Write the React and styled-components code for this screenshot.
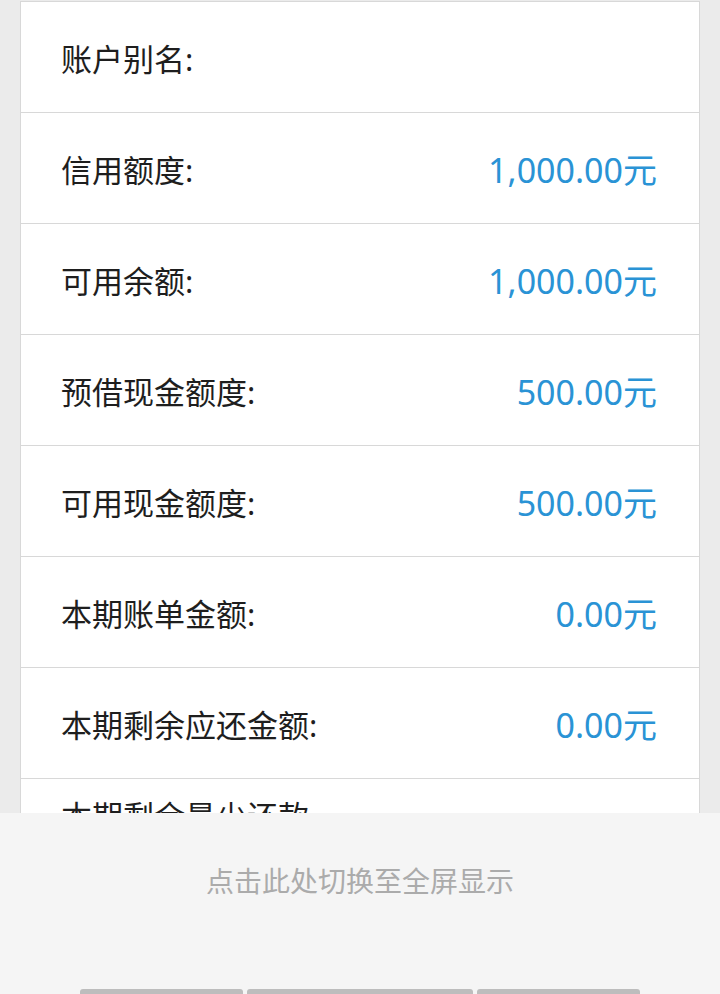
import React from "react";
import styled, { createGlobalStyle } from "styled-components";

const GlobalStyle = createGlobalStyle`
  html, body {
    margin: 0;
    padding: 0;
    background: #ebebeb;
    font-family: "Noto Sans", "Noto Sans CJK SC", sans-serif;
  }
`;

const Page = styled.div`
  padding: 1px 20px 0;
`;

const Card = styled.div`
  background: #fff;
  border-left: 1px solid #d8d8d8;
  border-right: 1px solid #d8d8d8;
`;

const Row = styled.div`
  display: flex;
  align-items: center;
  justify-content: space-between;
  min-height: 110px;
  padding: 0 42px 0 40px;
  border-top: 1px solid #d8d8d8;
`;

const Label = styled.span`
  max-width: 270px;
  font-size: 31px;
  line-height: 40px;
  color: #1e1e1e;
  padding-top: 3px;
`;

const Value = styled.span`
  font-size: 34px;
  line-height: 40px;
  color: #2a93d5;
  padding-top: 4px;
`;

const Overlay = styled.div`
  position: fixed;
  left: 0;
  right: 0;
  bottom: 0;
  height: 181px;
  background: #f5f5f5;
  display: flex;
  flex-direction: column;
  align-items: center;
`;

const Hint = styled.div`
  margin-top: 48px;
  font-size: 28px;
  line-height: 40px;
  color: #ababab;
`;

const Bars = styled.div`
  margin-top: auto;
  display: flex;
  gap: 4px;
`;

const Bar = styled.div`
  width: ${(p) => p.w}px;
  height: 5px;
  background: #bdbdbd;
  border-radius: 3px 3px 0 0;
`;

const rows = [
  ["账户别名:", ""],
  ["信用额度:", "1,000.00元"],
  ["可用余额:", "1,000.00元"],
  ["预借现金额度:", "500.00元"],
  ["可用现金额度:", "500.00元"],
  ["本期账单金额:", "0.00元"],
  ["本期剩余应还金额:", "0.00元"],
  ["本期剩余最少还款额:", "0.00元"],
];

export default function App() {
  return (
    <>
      <GlobalStyle />
      <Page>
        <Card>
          {rows.map(([label, value]) => (
            <Row key={label}>
              <Label>{label}</Label>
              <Value>{value}</Value>
            </Row>
          ))}
        </Card>
      </Page>
      <Overlay>
        <Hint>点击此处切换至全屏显示</Hint>
        <Bars>
          <Bar w={163} />
          <Bar w={226} />
          <Bar w={163} />
        </Bars>
      </Overlay>
    </>
  );
}
